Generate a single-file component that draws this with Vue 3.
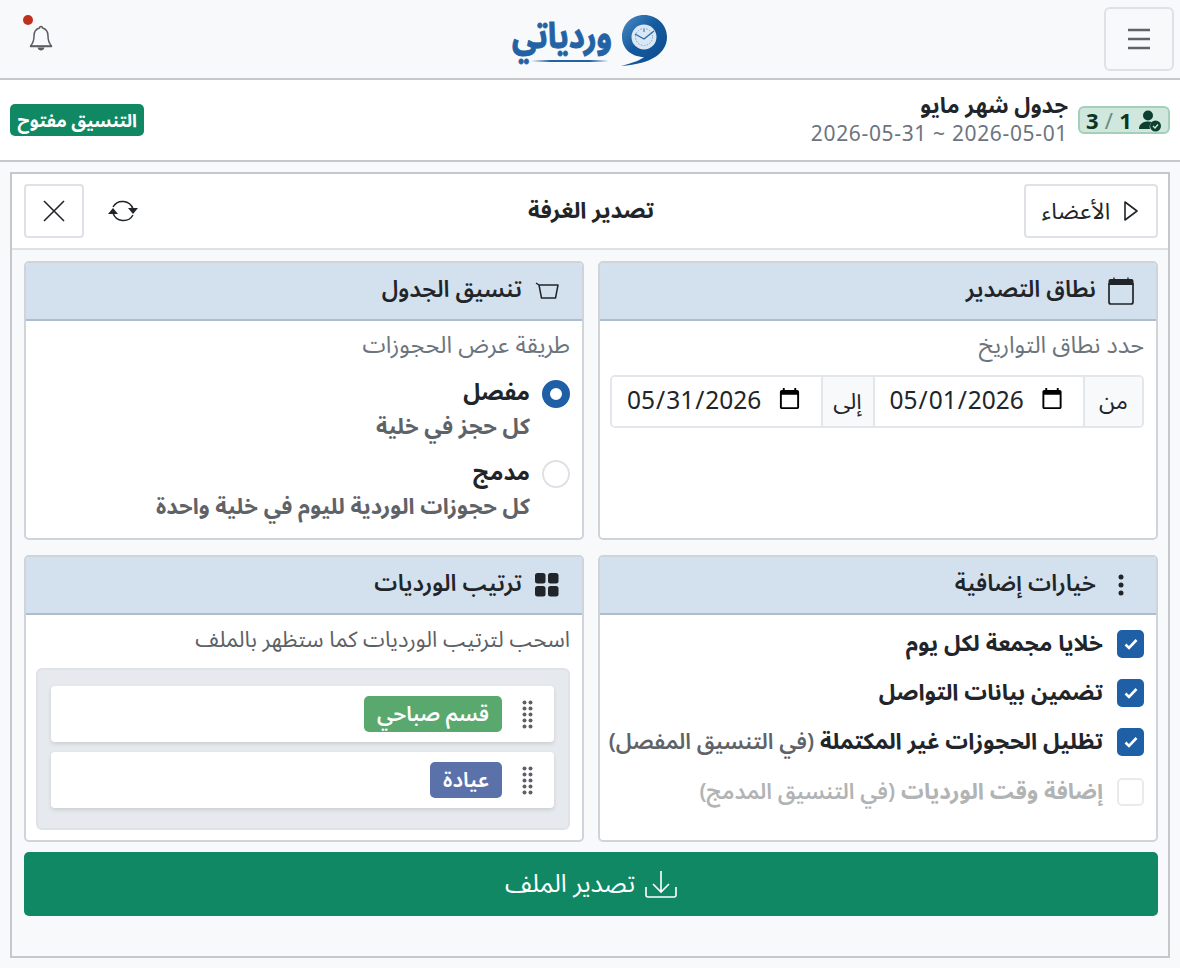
<template>
  <div class="page" dir="rtl">
    <header class="topbar">
      <div class="side">
        <button class="menu-btn" aria-label="menu">
          <svg width="22" height="22" viewBox="0 0 22 22"><path d="M0 2h22M0 11h22M0 20h22" stroke="#5f6368" stroke-width="2.400" fill="none"/></svg>
        </button>
      </div>
      <div class="logo">
        <svg class="logo-mark" width="48" height="54" viewBox="0 0 48 54">
          <defs>
            <linearGradient id="ring" x1="0" y1="0" x2="1" y2="1">
              <stop offset="0" stop-color="#4f8fc6"/>
              <stop offset=".45" stop-color="#155a9e"/>
              <stop offset="1" stop-color="#0c4a8c"/>
            </linearGradient>
          </defs>
          <path d="M24 1C37 1 47 11 47 23C47 38 33 50 1 52C14 49 22 45 24 43C11 43 2 34 2 23C2 11 11 1 24 1Z" fill="url(#ring)"/>
          <circle cx="24" cy="23" r="12.500" fill="#d9e8f4"/>
          <circle cx="24" cy="23" r="8.500" fill="none" stroke="#6f9dc7" stroke-width=".9" stroke-dasharray="1.500 1.500"/>
          <path d="M15 20L24 25L34 17" fill="none" stroke="#2a6aa8" stroke-width="1.300"/>
          <path d="M24 15v3" stroke="#2a6aa8" stroke-width="1"/>
        </svg>
        <div class="logo-word">
          <span>وردياتي</span>
          <i></i>
        </div>
      </div>
      <div class="side end">
        <button class="bell" aria-label="notifications">
          <svg width="26" height="30" viewBox="0 0 26 30">
            <path d="M13 3.500c-1 0-1.500.6-1.500 1.500C7.800 5.900 6 9 6 13c0 5-1.200 7.500-3.500 10h21C21.200 20.500 20 18 20 13c0-4-1.800-7.100-5.500-8C14.500 4.100 14 3.500 13 3.500Z" fill="none" stroke="#5b5f63" stroke-width="1.500" stroke-linejoin="round"/>
            <path d="M2 23.500h22" stroke="#5b5f63" stroke-width="1.500"/>
            <path d="M9.500 24.500h7c-.5 2-1.800 3-3.500 3s-3-1-3.500-3Z" fill="#5b5f63"/>
          </svg>
          <span class="dot"></span>
        </button>
      </div>
    </header>

    <section class="subbar">
      <div class="counter">
        <svg width="24" height="24" viewBox="0 0 24 24">
          <circle cx="10" cy="7.500" r="5" fill="#0c3f30"/>
          <path d="M1 21c0-5 4-7.500 9-7.500 1.500 0 2.700.2 3.800.6A6.500 6.500 0 0 0 12 21Z" fill="#0c3f30"/>
          <circle cx="17.500" cy="18" r="5.500" fill="#0c3f30"/>
          <path d="M15 18l2 2 3-3.500" fill="none" stroke="#cfe7dd" stroke-width="1.300"/>
        </svg>
        <span class="num">1</span>
        <span class="sep">/</span>
        <span class="num">3</span>
      </div>
      <div class="sched">
        <div class="sched-title">جدول شهر مايو</div>
        <div class="sched-dates">2026-05-01 ~ 2026-05-31</div>
      </div>
      <span class="open-badge">التنسيق مفتوح</span>
    </section>

    <main class="main">
      <div class="frame">
        <div class="frame-head">
          <div class="head-side">
            <button class="btn-outline members">
              <svg width="18" height="22" viewBox="0 0 18 22"><path d="M3 2 15 11 3 20Z" fill="none" stroke="#212529" stroke-width="1.600" stroke-linejoin="round"/></svg>
              <span>الأعضاء</span>
            </button>
          </div>
          <h1 class="frame-title">تصدير الغرفة</h1>
          <div class="head-side end">
            <button class="icon-plain" aria-label="refresh">
              <svg width="32" height="28" viewBox="0 0 32 28">
                <path d="M6 10A11 11 0 0 1 26 12M26 18A11 11 0 0 1 6 16" fill="none" stroke="#212529" stroke-width="1.500"/>
                <path d="M21 11h10l-5 6ZM1 17h10l-5-6Z" fill="#212529"/>
              </svg>
            </button>
            <button class="btn-outline close" aria-label="close">
              <svg width="24" height="24" viewBox="0 0 24 24"><path d="M2 2l20 20M22 2 2 22" stroke="#212529" stroke-width="1.600"/></svg>
            </button>
          </div>
        </div>

        <div class="panels">
          <article class="panel">
            <h2 class="panel-head">
              <span class="head-icon">
                <svg width="28" height="28" viewBox="0 0 28 28">
                  <path d="M2 7h24v18a2 2 0 0 1-2 2H4a2 2 0 0 1-2-2Z" fill="none" stroke="#212529" stroke-width="1.700"/>
                  <path d="M1.500 8V4a2 2 0 0 1 2-2h21a2 2 0 0 1 2 2v4Z" fill="#212529"/>
                  <path d="M7 .5v3M21 .5v3" stroke="#212529" stroke-width="1.400"/>
                </svg>
              </span>
              <span class="head-text">نطاق التصدير</span>
            </h2>
            <div class="panel-body">
              <p class="hint">حدد نطاق التواريخ</p>
              <div class="date-group">
                <span class="addon from">من</span>
                <input class="date" dir="ltr" type="date" value="2026-05-01" />
                <span class="addon to">إلى</span>
                <input class="date" dir="ltr" type="date" value="2026-05-31" />
              </div>
            </div>
          </article>

          <article class="panel">
            <h2 class="panel-head">
              <span class="head-icon">
                <svg width="24" height="18" viewBox="0 0 24 18">
                  <path d="M1 1 4 3h19l-2.500 13H6.500L4 3" fill="none" stroke="#212529" stroke-width="1.500" stroke-linejoin="round"/>
                </svg>
              </span>
              <span class="head-text">تنسيق الجدول</span>
            </h2>
            <div class="panel-body">
              <p class="hint">طريقة عرض الحجوزات</p>
              <div v-for="opt in layouts" :key="opt.title" class="radio-row">
                <span class="radio" :class="{ on: opt.on }"></span>
                <div>
                  <div class="radio-title">{{ opt.title }}</div>
                  <div class="radio-sub">{{ opt.sub }}</div>
                </div>
              </div>
            </div>
          </article>

          <article class="panel">
            <h2 class="panel-head">
              <span class="head-icon">
                <svg width="24" height="26" viewBox="0 0 24 26"><g fill="#212529"><circle cx="12" cy="5" r="2.500"/><circle cx="12" cy="13" r="2.500"/><circle cx="12" cy="21" r="2.500"/></g></svg>
              </span>
              <span class="head-text">خيارات إضافية</span>
            </h2>
            <div class="panel-body checks">
              <div v-for="c in extras" :key="c.label" class="check-row" :class="{ off: !c.on }">
                <span class="check" :class="{ on: c.on }">
                  <svg v-if="c.on" width="16" height="14" viewBox="0 0 16 14"><path d="M2.500 7.500 6 11l7.500-8" fill="none" stroke="#fff" stroke-width="2.600"/></svg>
                </span>
                <span class="check-label">{{ c.label }} <span v-if="c.note" class="note">{{ c.note }}</span></span>
              </div>
            </div>
          </article>

          <article class="panel">
            <h2 class="panel-head">
              <span class="head-icon">
                <svg width="26" height="26" viewBox="0 0 26 26"><g fill="#212529"><rect x="1" y="1" width="10.500" height="10.500" rx="2.500"/><rect x="14" y="1" width="10.500" height="10.500" rx="2.500"/><rect x="1" y="14" width="10.500" height="10.500" rx="2.500"/><rect x="14" y="14" width="10.500" height="10.500" rx="2.500"/></g></svg>
              </span>
              <span class="head-text">ترتيب الورديات</span>
            </h2>
            <div class="panel-body">
              <p class="hint dark">اسحب لترتيب الورديات كما ستظهر بالملف</p>
              <div class="sort-box">
                <div v-for="s in shifts" :key="s.name" class="sort-item">
                  <svg class="grip" width="11" height="29" viewBox="0 0 11 29"><g fill="#5c6166"><template v-for="y in [2.500, 8.500, 14.500, 20.500, 26.500]" :key="y"><circle cx="2.500" :cy="y" r="2"/><circle cx="8.500" :cy="y" r="2"/></template></g></svg>
                  <span class="shift" :class="s.cls">{{ s.name }}</span>
                </div>
              </div>
            </div>
          </article>
        </div>

        <button class="export">
          <svg width="32" height="28" viewBox="0 0 32 28">
            <path d="M16 1v21M8 14l8 8 8-8M1 17v8a2 2 0 0 0 2 2h26a2 2 0 0 0 2-2v-8" fill="none" stroke="#fff" stroke-width="1.600"/>
          </svg>
          <span>تصدير الملف</span>
        </button>
      </div>
    </main>
  </div>
</template>

<script setup>
const layouts = [
  { title: 'مفصل', sub: 'كل حجز في خلية', on: true },
  { title: 'مدمج', sub: 'كل حجوزات الوردية لليوم في خلية واحدة', on: false }
]

const extras = [
  { label: 'خلايا مجمعة لكل يوم', on: true },
  { label: 'تضمين بيانات التواصل', on: true },
  { label: 'تظليل الحجوزات غير المكتملة', note: '(في التنسيق المفصل)', on: true },
  { label: 'إضافة وقت الورديات', note: '(في التنسيق المدمج)', on: false }
]

const shifts = [
  { name: 'قسم صباحي', cls: 'green' },
  { name: 'عيادة', cls: 'blue' }
]
</script>

<style>
html, body { margin: 0; background: #f8f9fa; }
</style>

<style scoped>
.page {
  width: 1180px;
  height: 968px;
  overflow: hidden;
  background: #f8f9fa;
  color: #212529;
  font-family: "Noto Sans", "Noto Sans Arabic", "DejaVu Sans", sans-serif;
  font-size: 24px;
}

button { font-family: inherit; cursor: pointer; }

.topbar {
  height: 78px;
  border-bottom: 2px solid #c5c7ca;
  display: flex;
  align-items: center;
  padding: 0 6px 0 0;
}
.side { flex: 1 1 0; display: flex; }
.side.end { justify-content: flex-end; margin-right: -6px; }
.menu-btn {
  width: 70px;
  height: 64px;
  background: transparent;
  border: 2px solid #dee2e6;
  border-radius: 6px;
  display: flex;
  align-items: center;
  justify-content: center;
  padding: 0;
}
.logo {
  display: flex;
  align-items: center;
  gap: 8px;
  margin-right: -12px;
}
.logo-mark { display: block; margin-top: 4px; }
.logo-word { display: flex; flex-direction: column; align-items: flex-start; }
.logo-word span {
  font-size: 31px;
  font-weight: 700;
  color: #2362a4;
  line-height: 44px;
  -webkit-text-stroke: .8px #2362a4;
  transform: translateY(-4px) scaleY(1.15);
}
.logo-word i {
  width: 78px;
  height: 2px;
  margin-right: 3px;
  background: linear-gradient(90deg, transparent, #2362a4 25%, #2362a4 75%, transparent);
}
.bell {
  background: none;
  border: 0;
  padding: 9px 0 0 5px;
  width: 46px;
  height: 50px;
  margin-left: 16px;
  position: relative;
  display: flex;
  align-items: flex-start;
  justify-content: center;
}
.dot {
  position: absolute;
  top: 1px;
  left: 7px;
  width: 10px;
  height: 10px;
  border-radius: 50%;
  background: #c0301f;
}

.subbar {
  height: 80px;
  background: #fff;
  border-bottom: 2px solid #c5c7ca;
  display: flex;
  align-items: center;
  padding: 0 10px;
  gap: 10px;
}
.counter {
  width: 92px;
  height: 28px;
  box-sizing: border-box;
  padding: 0 6px 0 6px;
  background: #cfe7dd;
  border: 2px solid #a3cfbb;
  border-radius: 6px;
  display: flex;
  align-items: center;
  justify-content: space-between;
  color: #0a3622;
  font-weight: 700;
  font-size: 22px;
}
.sep { color: #6a8c7f; font-weight: 400; }
.sched { flex: 1; padding-bottom: 4px; }
.sched-title { font-size: 22px; font-weight: 700; line-height: 30px; }
.sched-dates { font-size: 21px; line-height: 28px; color: #6c757d; letter-spacing: .65px; }
.open-badge {
  background: #0f8863;
  color: #fff;
  font-size: 18px;
  font-weight: 700;
  line-height: 32px;
  padding: 0 7.500px;
  border-radius: 5px;
}

.main { padding: 10px; }
.frame {
  height: 786px;
  box-sizing: border-box;
  border: 2px solid #c5c7ca;
  display: flex;
  flex-direction: column;
}
.frame-head {
  height: 76px;
  flex: none;
  box-sizing: border-box;
  background: #fff;
  border-bottom: 2px solid #dee2e6;
  display: flex;
  align-items: center;
  padding: 0 10px 0 12px;
}
.head-side { flex: 1 1 0; display: flex; align-items: center; }
.head-side.end { justify-content: flex-end; gap: 23px; }
.frame-title {
  margin: 0;
  font-size: 22.500px;
  font-weight: 700;
}
.btn-outline {
  height: 54px;
  box-sizing: border-box;
  background: #fff;
  border: 2px solid #dee2e6;
  border-radius: 4px;
  display: flex;
  align-items: center;
  justify-content: center;
  color: #212529;
  font-size: 23px;
  padding: 0;
}
.members { width: 134px; gap: 12px; }
.close { width: 60px; }
.icon-plain { background: none; border: 0; padding: 0; display: flex; }

.panels {
  display: grid;
  grid-template-columns: 560px 560px;
  grid-template-rows: 279px 287px;
  column-gap: 14px;
  row-gap: 15px;
  padding: 11px 10px 10px 12px;
}
.panel {
  box-sizing: border-box;
  background: #fff;
  border: 2px solid #ced4da;
  border-radius: 5px;
  overflow: hidden;
}
.panel-head {
  height: 58px;
  box-sizing: border-box;
  margin: 0;
  background: #d3e0ed;
  border-bottom: 2px solid #aebccb;
  display: flex;
  align-items: center;
  gap: 11px;
  padding: 0 21px;
  font-size: 23px;
  font-weight: 600;
}
.head-text { padding-bottom: 4px; }
.head-icon { width: 28px; display: flex; justify-content: center; }
.panel-body { padding: 6px 12px 8px; }
.hint {
  margin: 0;
  padding-bottom: 2px;
  font-size: 23.500px;
  line-height: 34px;
  color: #6c757d;
}
.hint.dark { color: #5c6166; font-size: 22px; }

.date-group {
  display: flex;
  height: 53px;
  box-sizing: border-box;
  margin: 12px 0 0 -2px;
  border: 2px solid #e3e6ea;
  border-radius: 5px;
  overflow: hidden;
}
.addon {
  background: #f8f9fa;
  flex: none;
  display: flex;
  align-items: center;
  justify-content: center;
  font-size: 23px;
}
.addon.from { width: 57px; }
.addon.to { width: 50px; border-right: 2px solid #e3e6ea; }
.date {
  flex: 1;
  min-width: 0;
  width: 0;
  border: 0;
  border-right: 2px solid #e3e6ea;
  padding: 0 17px 4px 14px;
  font-family: "Noto Sans", sans-serif;
  font-size: 24.500px;
  color: #212529;
  background: #fff;
  outline: none;
}

.radio-row { display: flex; gap: 12px; margin-top: 12px; }
.radio {
  width: 28px;
  height: 28px;
  flex: none;
  box-sizing: border-box;
  border-radius: 50%;
  border: 2px solid #dee2e6;
  background: #fff;
  margin-top: 5px;
}
.radio.on { border: 8px solid #1f5fa5; }
.radio-title { font-size: 23px; font-weight: 700; line-height: 32px; }
.radio-sub { font-size: 22px; font-weight: 700; line-height: 36px; color: #5f6368; }

.checks { padding-top: 4px; }
.check-row { display: flex; align-items: center; gap: 14px; height: 49.300px; }
.check {
  width: 27px;
  height: 28px;
  flex: none;
  box-sizing: border-box;
  border-radius: 5px;
  border: 2px solid #e8eaed;
  display: flex;
  align-items: center;
  justify-content: center;
}
.check.on { background: #1f5fa5; border-color: #1f5fa5; }
.check-label { font-size: 22.500px; font-weight: 700; white-space: nowrap; }
.note { color: #5f6368; font-weight: 600; font-size: 22px; }
.check-row.off .check-label, .check-row.off .note { color: #b1b3b5; }

.sort-box {
  margin: 11px 0 0 -2px;
  padding: 16px 14px 20px 13px;
  background: #e6eaee;
  border: 2px solid #dfe3e7;
  border-radius: 6px;
  display: flex;
  flex-direction: column;
  gap: 10px;
}
.sort-item {
  height: 56px;
  background: #fff;
  border-radius: 4px;
  box-shadow: 0 2px 4px rgba(0, 0, 0, .12);
  display: flex;
  align-items: center;
  gap: 20px;
  padding: 0 21px;
}
.shift {
  height: 36px;
  display: flex;
  align-items: center;
  padding: 0 13px;
  border-radius: 5px;
  color: #fff;
  font-size: 21px;
  font-weight: 600;
}
.green { background: #59a96f; }
.blue { background: #5a72a9; }

.export {
  margin: 0 10px 0 12px;
  height: 64px;
  flex: none;
  border: 0;
  border-radius: 5px;
  background: #0f8863;
  color: #fff;
  font-size: 25px;
  display: flex;
  align-items: center;
  justify-content: center;
  gap: 10px;
}
</style>
